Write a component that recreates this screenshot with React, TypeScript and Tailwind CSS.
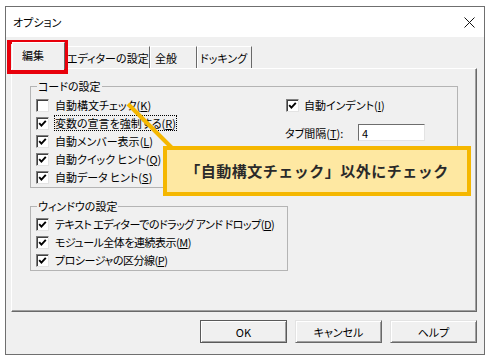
import React from "react";

const CODE_ROWS = [
  { label: "自動構文チェック", key: "K", checked: false },
  { label: "変数の宣言を強制する", key: "R", checked: true, focus: true },
  { label: "自動メンバー表示", key: "L", checked: true },
  { label: "自動クイック ヒント", key: "Q", checked: true },
  { label: "自動データ ヒント", key: "S", checked: true },
];

const WINDOW_ROWS = [
  { label: "テキスト エディターでのドラッグ アンド ドロップ", key: "D", checked: true },
  { label: "モジュール全体を連続表示", key: "M", checked: true },
  { label: "プロシージャの区分線", key: "P", checked: true },
];

function CheckBox({ checked }: { checked: boolean }) {
  return (
    <span className="flex h-[13px] w-[13px] shrink-0 items-center justify-center border border-t-[#808080] border-l-[#808080] border-r-[#e3e3e3] border-b-[#e3e3e3] bg-white shadow-[inset_1px_1px_0_#404040]">
      {checked && (
        <svg width="9" height="9" viewBox="0 0 9 9">
          <path d="M1.2 4.2 L3.4 6.6 L7.8 1.8" fill="none" stroke="#000" strokeWidth="1.9" />
        </svg>
      )}
    </span>
  );
}

function Row({
  label,
  k,
  checked,
  focus,
  tight,
}: {
  label: string;
  k: string;
  checked: boolean;
  focus?: boolean;
  tight?: boolean;
}) {
  return (
    <div
      className={
        tight
          ? "flex h-[18px] items-center gap-[6px] whitespace-nowrap tracking-[-0.5px]"
          : "flex h-[18px] items-center gap-[6px] whitespace-nowrap"
      }
    >
      <CheckBox checked={checked} />
      <span
        className={
          focus
            ? "leading-[14px] outline-1 outline-dotted outline-black"
            : "leading-[14px]"
        }
      >
        {label}(<span className="underline">{k}</span>)
      </span>
    </div>
  );
}

function Button({ children, primary }: { children: React.ReactNode; primary?: boolean }) {
  return (
    <div
      className={
        primary
          ? "flex h-[23px] w-[87px] items-center justify-center border border-[#5a5a5a] bg-[#f0f0f0] shadow-[inset_1px_1px_0_#fff,inset_-1px_-1px_0_#a0a0a0]"
          : "flex h-[23px] w-[87px] items-center justify-center border border-t-[#e3e3e3] border-l-[#e3e3e3] border-r-[#696969] border-b-[#696969] bg-[#f0f0f0] shadow-[inset_1px_1px_0_#fff,inset_-1px_-1px_0_#a0a0a0]"
      }
    >
      {children}
    </div>
  );
}

export default function App() {
  return (
    <div className="relative h-[362px] w-[493px] overflow-hidden bg-white font-['Noto_Sans_CJK_JP','Noto_Sans',sans-serif] text-[11px] leading-[14px] text-black [font-feature-settings:'palt']">
      {/* Dialog window */}
      <div className="ml-[5px] mt-[6px] flex h-[349px] w-[480px] flex-col border border-[#6f6f6f] bg-[#f0f0f0]">
        <div className="flex h-[30px] shrink-0 items-center justify-between bg-white pl-[7px] pr-[9px]">
          <span>オプション</span>
          <svg width="11" height="11" viewBox="0 0 11 11">
            <path d="M0.5 0.5 L10.5 10.5 M10.5 0.5 L0.5 10.5" stroke="#111" strokeWidth="1" />
          </svg>
        </div>

        <div className="flex flex-1 flex-col pt-[5px]">
          {/* Tabs */}
          <div className="flex h-[26px] items-end pl-[6px]">
            <div className="relative z-10 -mb-px flex h-[27px] w-[53px] items-center border-l border-t border-r border-white border-r-[#696969] bg-[#f0f0f0] pl-[9px] pb-[2px]">
              編集
            </div>
            <div className="flex h-[22px] w-[85px] items-center border-t border-r border-t-white border-r-[#696969] pl-[2px] whitespace-nowrap">
              エディターの設定
            </div>
            <div className="flex h-[22px] w-[47px] items-center border-l border-t border-r border-white border-r-[#696969] pl-[4px]">
              全般
            </div>
            <div className="flex h-[22px] w-[55px] items-center border-l border-t border-r border-white border-r-[#696969] pl-[2px] whitespace-nowrap">
              ドッキング
            </div>
          </div>

          {/* Tab panel */}
          <div className="ml-[5px] h-[244px] w-[466px] border border-t-white border-l-white border-r-[#696969] border-b-[#696969] shadow-[inset_-1px_-1px_0_#a0a0a0]">
            <fieldset className="ml-[18px] mt-[10px] w-[428px] min-w-0 border border-[#b4b4b4] px-[5px]">
              <legend className="ml-[1px] px-[1px] leading-[14px]">コードの設定</legend>
              <div className="flex pt-[3px] pb-[1px]">
                <div className="w-[249px]">
                  {CODE_ROWS.map((r) => (
                    <Row key={r.key} label={r.label} k={r.key} checked={r.checked} focus={r.focus} />
                  ))}
                </div>
                <div className="flex flex-col">
                  <div className="flex h-[18px] items-center gap-[5px] pl-[1px] whitespace-nowrap">
                    <CheckBox checked />
                    <span>
                      自動インデント(<span className="underline">I</span>)
                    </span>
                  </div>
                  <div className="mt-[10px] flex h-[17px] items-center whitespace-nowrap">
                    <span className="w-[73px]">
                      タブ間隔(<span className="underline">T</span>):
                    </span>
                    <div className="flex h-[17px] w-[67px] items-center border border-t-[#6d6d6d] border-l-[#6d6d6d] border-r-[#e3e3e3] border-b-[#e3e3e3] bg-white pl-[3px]">
                      4
                    </div>
                  </div>
                </div>
              </div>
            </fieldset>

            <fieldset className="ml-[18px] mt-[11px] w-[258px] min-w-0 border border-[#b4b4b4] px-[5px]">
              <legend className="ml-[1px] px-[1px] leading-[14px]">ウィンドウの設定</legend>
              <div className="pt-[2px] pb-[1px]">
                {WINDOW_ROWS.map((r) => (
                  <Row key={r.key} label={r.label} k={r.key} checked={r.checked} tight />
                ))}
              </div>
            </fieldset>
          </div>

          {/* Buttons */}
          <div className="mt-[8px] flex justify-end gap-[8px] pr-[7px]">
            <Button primary>OK</Button>
            <Button>キャンセル</Button>
            <Button>ヘルプ</Button>
          </div>
        </div>
      </div>

      {/* Annotation: red frame around selected tab */}
      <div className="absolute left-[7px] top-[40px] h-[34px] w-[61px] border-[4px] border-[#e8000b]" />

      {/* Annotation: callout */}
      <svg className="absolute left-0 top-0" width="493" height="362">
        <line x1="128" y1="104" x2="176" y2="152" stroke="#f5b700" strokeWidth="4" />
      </svg>
      <div className="absolute left-[163px] top-[146px] flex h-[50px] w-[308px] items-center justify-center border-[4px] border-[#f5b700] bg-[#fee8a2] text-[15px] font-bold tracking-[0.5px] text-[#2a2a2a] [font-feature-settings:normal]">
        「自動構文チェック」以外にチェック
      </div>
    </div>
  );
}
